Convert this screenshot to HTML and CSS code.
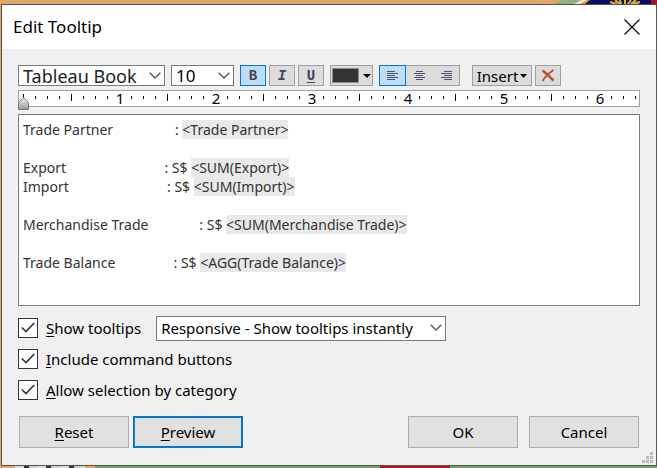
FILE: index.html
```html
<!DOCTYPE html>
<html lang="en">
<head>
<meta charset="utf-8">
<title>Edit Tooltip</title>
<link rel="stylesheet" href="styles.css">
</head>
<body>
<svg class="backdrop top" width="104" height="4" viewBox="0 0 104 4" aria-hidden="true">
  <path fill="#8db384" d="M10 0h20l-8 4H0z"/><path fill="#e8e8e0" d="M28 0h6l-7 4h-6z"/>
  <path fill="#caa52a" d="M34 0h5l-5 4h-6z"/><path fill="#0b0b66" d="M37 0h61v4H32z"/><path fill="#a8122a" d="M98 0h6v4h-6z"/>
  <path d="M57 2l7 2M62 0l5 4M67 0l1 4M72 0v4M78 0l-3 4M83 0l-5 4M87 2l-7 2" stroke="#e0b826" stroke-width="2"/>
</svg>
<div class="backdrop bottom" aria-hidden="true"><i class="seal"></i><i class="field"><b class="flag"></b></i></div>

<main class="dialog">
  <header class="titlebar">
    <h1>Edit Tooltip</h1>
    <button class="close" type="button" aria-label="Close">
      <svg width="16" height="16" viewBox="0 0 16 16"><path d="M.5.5l15 15M15.500.5l-15 15" stroke="#000" stroke-width="1.100"/></svg>
    </button>
  </header>

  <form class="content">
    <div class="toolbar">
      <span class="combo font">
        <select aria-label="Font"><option>Tableau Book</option></select>
        <svg class="chevron" width="12" height="7" viewBox="0 0 12 7"><path d="M.7.7L6 6 11.300.7"/></svg>
      </span>
      <span class="combo size">
        <select aria-label="Font size"><option>10</option></select>
        <svg class="chevron" width="12" height="7" viewBox="0 0 12 7"><path d="M.7.7L6 6 11.300.7"/></svg>
      </span>
      <div class="styles">
        <button class="tool on bold" type="button" aria-pressed="true">B</button>
        <button class="tool italic" type="button">I</button>
        <button class="tool under" type="button">U</button>
      </div>
      <button class="tool color" type="button" aria-label="Text color"><span class="swatch"></span><svg width="8" height="4" viewBox="0 0 8 4"><path d="M0 0h8L4 4z"/></svg></button>
      <div class="align">
        <button class="tool on" type="button" aria-label="Align left" aria-pressed="true"><svg width="11" height="10" viewBox="0 0 11 10"><path d="M0 .5h8M0 2.500h11M0 4.500h8M0 6.500h11M0 8.500h8"/></svg></button>
        <button class="tool" type="button" aria-label="Align center"><svg width="11" height="10" viewBox="0 0 11 10"><path d="M2 .5h7M0 2.500h11M2 4.500h7M0 6.500h11M2 8.500h7"/></svg></button>
        <button class="tool" type="button" aria-label="Align right"><svg width="11" height="10" viewBox="0 0 11 10"><path d="M3 .5h8M0 2.500h11M3 4.500h8M0 6.500h11M3 8.500h8"/></svg></button>
      </div>
      <div class="actions">
        <button class="tool insert" type="button">Insert<svg width="7" height="4" viewBox="0 0 7 4"><path d="M0 0h7L3.500 4z"/></svg></button>
        <button class="tool" type="button" aria-label="Clear"><svg width="14" height="13" viewBox="0 0 14 13"><path d="M1.500 1.500C5 4 9 8 12.500 11.500" stroke="#b9512f" stroke-width="2.500" fill="none"/><path d="M12.500 1C8 4 4 8 1.500 12" stroke="#b9512f" stroke-width="1.800" fill="none"/></svg></button>
      </div>
    </div>

    <div class="ruler">
      <svg class="scale" width="100%" height="15" aria-hidden="true">
        <defs><pattern id="inch" x="4" width="96" height="15" patternUnits="userSpaceOnUse">
          <path d="M12.500 5v3M24.500 5v3M36.500 5v3M48.500 3v7M60.500 5v3M72.500 5v3M84.500 5v3" stroke="#000"/>
        </pattern></defs>
        <rect width="100%" height="15" fill="url(#inch)"/>
        <path d="M4.500 3v5" stroke="#000"/>
        <text x="101" y="13">1</text><text x="197" y="13">2</text><text x="293" y="13">3</text>
        <text x="389" y="13">4</text><text x="485" y="13">5</text><text x="581" y="13">6</text>
      </svg>
      <svg class="marker" width="11" height="13" viewBox="0 0 11 13" aria-hidden="true">
        <defs><linearGradient id="metal" x2="0" y2="1"><stop stop-color="#eee"/><stop offset="1" stop-color="#999"/></linearGradient></defs>
        <path d="M.5 12.500V5.500L5.500.7l5 4.800v7z" fill="url(#metal)" stroke="#777"/>
      </svg>
    </div>

    <div class="editor" role="textbox" aria-multiline="true" aria-label="Tooltip text" contenteditable="true" spellcheck="false"><p>Trade Partner                 : <mark>&lt;Trade Partner&gt;</mark></p><p>&nbsp;</p><p>Export                           : S$ <mark>&lt;SUM(Export)&gt;</mark></p><p>Import                           : S$ <mark>&lt;SUM(Import)&gt;</mark></p><p>&nbsp;</p><p>Merchandise Trade              : S$ <mark>&lt;SUM(Merchandise Trade)&gt;</mark></p><p>&nbsp;</p><p>Trade Balance                : S$ <mark>&lt;AGG(Trade Balance)&gt;</mark></p></div>

    <div class="options">
      <div class="option">
        <label class="check"><input type="checkbox" checked><svg width="14" height="11" viewBox="0 0 14 11"><path d="M.8 5.500L5 9.500 13.200 1"/></svg><span><u>S</u>how tooltips</span></label>
        <span class="combo mode">
          <select aria-label="Tooltip behavior"><option>Responsive - Show tooltips instantly</option></select>
          <svg class="chevron" width="12" height="7" viewBox="0 0 12 7"><path d="M.7.7L6 6 11.300.7"/></svg>
        </span>
      </div>
      <div class="option">
        <label class="check"><input type="checkbox" checked><svg width="14" height="11" viewBox="0 0 14 11"><path d="M.8 5.500L5 9.500 13.200 1"/></svg><span><u>I</u>nclude command buttons</span></label>
      </div>
      <div class="option">
        <label class="check"><input type="checkbox" checked><svg width="14" height="11" viewBox="0 0 14 11"><path d="M.8 5.500L5 9.500 13.200 1"/></svg><span><u>A</u>llow selection by category</span></label>
      </div>
    </div>

    <footer class="buttons">
      <button class="push" type="button"><u>R</u>eset</button>
      <button class="push default" type="button"><u>P</u>review</button>
      <button class="push ok" type="button">OK</button>
      <button class="push cancel" type="button">Cancel</button>
    </footer>
  </form>
  <svg class="grip" width="11" height="11" viewBox="0 0 11 11" aria-hidden="true"><path fill="#bcbcbc" d="M8 0h3v3H8zM4 4h3v3H4zM8 4h3v3H8zM0 8h3v3H0zM4 8h3v3H4zM8 8h3v3H8z"/></svg>
</main>
</body>
</html>
```
FILE: styles.css
```css
* { box-sizing: border-box; }

body {
  margin: 0;
  min-height: 100vh;
  padding: 4px 0 2px 1px;
  display: flex;
  position: relative;
  overflow: hidden;
  background: #e2a56c;
  color: #000;
  font: 15px/20px "Noto Sans", sans-serif;
}

button, select, input { font: inherit; color: inherit; margin: 0; }
p, h1 { margin: 0; }
svg { display: block; flex: none; }

.backdrop { position: absolute; }
.backdrop.top { top: 0; right: 0; }
.backdrop.bottom { left: 0; right: 0; bottom: 0; height: 2px; display: flex; }
.seal { width: 70px; margin: 0 10px 0 15px; background: repeating-linear-gradient(100deg, #ddd 0 9px, #333 9px 14px, #ccc 14px 22px); }
.field { flex: 1; background: #78a078; }
.flag { display: block; width: 70px; height: 2px; margin-left: 285px; background: #a8122a; }

.dialog {
  position: relative;
  flex: 1;
  display: flex;
  flex-direction: column;
  background: #f0f0f0;
  border: 1px solid #5b5146;
  border-right-color: #4c5f4c;
}

.titlebar {
  height: 44px;
  padding: 0 16px 0 11px;
  display: flex;
  align-items: center;
  justify-content: space-between;
  background: #fff;
}
.titlebar h1 { font-size: 17px; font-weight: 400; line-height: 24px; }
.close { padding: 0; border: 0; background: none; }

.content {
  flex: 1;
  display: flex;
  flex-direction: column;
  padding: 16px 16px 17px;
}

.toolbar { display: flex; gap: 6px; height: 21px; }
.combo { position: relative; display: block; }
.combo select {
  appearance: none;
  display: block;
  width: 100%;
  height: 100%;
  padding: 0 4px;
  border: 1px solid #7a7a7a;
  border-radius: 0;
  background: #fff;
}
.chevron { position: absolute; right: 4px; top: 50%; margin-top: -4px; pointer-events: none; fill: none; stroke: #555; stroke-width: 1.3; }
.font { width: 147px; }
.font select { font-size: 18px; line-height: 18px; color: #222; }
.size { width: 63px; }
.size select { font-size: 17px; line-height: 18px; }
.styles { display: flex; gap: 3px; }
.align { display: flex; }
.actions { display: flex; gap: 3px; margin-left: 6px; }

.tool {
  width: 26px;
  height: 21px;
  padding: 0;
  display: flex;
  align-items: center;
  justify-content: center;
  border: 1px solid #a0a0a0;
  background: #dcdcdc;
}
.tool.on { background: #c0dcf3; border-color: #0078d7; }
.bold, .italic, .under { color: #3b4658; font: 700 14px/16px "Liberation Mono", monospace; }
.italic { font-style: italic; }
.under { text-decoration: underline; text-decoration-thickness: 1px; text-underline-offset: 2px; }
.color { width: 43px; gap: 4px; }
.swatch { width: 27px; height: 15px; background: #333; border: 1px solid #8a8a8a; }
.align .tool { width: 27px; border-left-width: 0; }
.align .tool.on { border-left-width: 1px; }
.align .tool:nth-child(2) { border-right-width: 0; }
.align path { stroke: #47536a; }
.insert { width: 60px; gap: 2px; font-size: 15px; }

.ruler { position: relative; height: 17px; margin: 4px 0 7px; border: 1px solid #a0a0a0; background: #fff; }
.scale { overflow: visible; }
.scale text { font-size: 15px; text-anchor: middle; paint-order: stroke; stroke: #fff; stroke-width: 1px; }
.marker { position: absolute; left: -1px; top: 6px; }

.editor {
  min-height: 192px;
  padding: 5px 4px 4px;
  border: 1px solid #7a7a7a;
  background: #fff;
  color: #333;
  font: 14px/19px "Noto Sans", sans-serif;
  white-space: pre;
  overflow: hidden;
  outline: none;
}
.editor mark { display: inline-block; background: #e9e9e9; color: inherit; }

.options { display: grid; gap: 5px; margin-top: 9px; }
.option { display: flex; align-items: center; gap: 15px; min-height: 26px; }
.check { position: relative; display: flex; align-items: center; gap: 8px; }
.check input { appearance: none; width: 20px; height: 20px; border: 1px solid #333; background: #fff; }
.check svg { position: absolute; left: 3px; top: 50%; margin-top: -6px; fill: none; stroke: #333; stroke-width: 1.6; pointer-events: none; }
.mode { width: 290px; height: 25px; }

u { text-decoration: underline; text-decoration-thickness: 1px; text-underline-offset: 2px; text-decoration-skip-ink: none; }

.buttons { display: flex; margin-top: auto; padding: 0 1px; gap: 4px; }
.push { width: 110px; height: 32px; padding: 0; border: 1px solid #adadad; background: #e1e1e1; }
.push.default { border: 2px solid #0078d7; }
.ok { margin-left: auto; }
.cancel { margin-left: 7px; }

.grip { position: absolute; right: 3px; bottom: 2px; }
```
